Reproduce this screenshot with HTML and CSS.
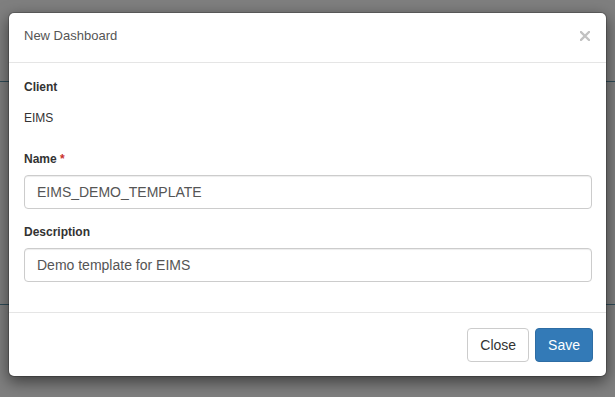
FILE: index.html
```html
<!DOCTYPE html>
<html lang="en">
<head>
    <meta charset="UTF-8">
    <meta name="viewport" content="width=device-width, initial-scale=1.0">
    <title>New Dashboard</title>
    <link rel="stylesheet" href="styles.css">
</head>
<body>
    <div class="modal">
        <div class="modal-content">
            <div class="modal-header">
                <h4 class="modal-title">New Dashboard</h4>
                <button class="close" type="button" aria-label="Close">
                    <svg width="10" height="10" viewBox="0 0 10 10">
                        <path d="M1 1 L9 9 M9 1 L1 9" stroke="#c2c2c2" stroke-width="2.3" stroke-linecap="square"/>
                    </svg>
                </button>
            </div>

            <div class="modal-body">
                <div class="form-group">
                    <label>Client</label>
                    <div class="static">EIMS</div>
                </div>

                <div class="form-group">
                    <label>Name <span class="req">*</span></label>
                    <input class="form-control" type="text" value="EIMS_DEMO_TEMPLATE">
                </div>

                <div class="form-group">
                    <label>Description</label>
                    <input class="form-control" type="text" value="Demo template for EIMS">
                </div>
            </div>

            <div class="modal-footer">
                <button class="btn btn-default" type="button">Close</button>
                <button class="btn btn-primary" type="button">Save</button>
            </div>
        </div>
    </div>
</body>
</html>
```
FILE: styles.css
```css
* {
    box-sizing: border-box;
}
body {
    margin: 0;
    font-family: "Liberation Sans", Arial, sans-serif;
    color: #333;
    background-color: #7f7f7f;
    background-image:
        linear-gradient(to bottom,
            transparent 81px, #2e4b57 81px, #2e4b57 82px, transparent 82px,
            transparent 304px, #2e4b57 304px, #2e4b57 305px, transparent 305px);
    height: 397px;
    overflow: hidden;
}
.modal {
    padding: 12px 8px 0;
}
.modal-content {
    width: 599px;
    background: #fff;
    background-clip: padding-box;
    border: 1px solid rgba(0, 0, 0, .2);
    border-radius: 6px;
    box-shadow: 0 5px 15px rgba(0, 0, 0, .5);
}
.modal-header {
    display: flex;
    justify-content: space-between;
    align-items: center;
    padding: 13px 15px 16px;
    border-bottom: 1px solid #e5e5e5;
}
.modal-title {
    margin: 0;
    font-size: 13px;
    font-weight: normal;
    line-height: 20px;
    color: #555;
}
.close {
    display: flex;
    padding: 0;
    margin: 0 1px 0 0;
    border: 0;
    background: none;
    cursor: pointer;
}
.modal-body {
    padding: 14px 14px 17px 15px;
}
.form-group {
    margin-bottom: 13px;
}
label {
    display: block;
    font-size: 12px;
    font-weight: bold;
    line-height: 20px;
    margin-bottom: 6px;
    color: #333;
}
.req {
    color: #c9302c;
}
.static {
    font-size: 12px;
    line-height: 20px;
    padding: 5px 0 8px;
    color: #333;
}
.form-control {
    display: block;
    width: 100%;
    height: 34px;
    padding: 6px 12px;
    font-family: inherit;
    font-size: 14px;
    line-height: 20px;
    color: #555;
    background: #fff;
    border: 1px solid #ccc;
    border-radius: 4px;
    box-shadow: inset 0 1px 1px rgba(0, 0, 0, .075);
}
.modal-footer {
    display: flex;
    justify-content: flex-end;
    gap: 6px;
    padding: 15px 13px 14px 15px;
    border-top: 1px solid #e5e5e5;
}
.btn {
    height: 34px;
    padding: 6px 12px;
    font-family: inherit;
    font-size: 14px;
    line-height: 20px;
    border: 1px solid transparent;
    border-radius: 4px;
    cursor: pointer;
}
.btn-default {
    color: #333;
    background: #fff;
    border-color: #ccc;
}
.btn-primary {
    color: #fff;
    background: #337ab7;
    border-color: #2e6da4;
}
```
